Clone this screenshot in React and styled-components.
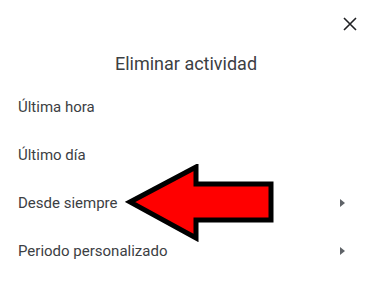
import styled, {createGlobalStyle} from 'styled-components';

const GlobalStyle = createGlobalStyle`
  html, body {
    margin: 0;
    padding: 0;
    background: #ffffff;
  }
  body {
    font-family: Roboto, "Noto Sans", Arial, sans-serif;
    color: #202124;
  }
`;

const items = [
  {label: 'Última hora', sub: false},
  {label: 'Último día', sub: false},
  {label: 'Desde siempre', sub: true},
  {label: 'Periodo personalizado', sub: true},
];

const App = () => {
  return (
    <Dialog>
      <GlobalStyle />
      <TopBar>
        <CloseButton aria-label="Cerrar">
          <svg width="14" height="14" viewBox="0 0 14 14">
            <path
              d="M1 1 L13 13 M13 1 L1 13"
              stroke="#202124"
              strokeWidth="1.6"
              fill="none"
            />
          </svg>
        </CloseButton>
      </TopBar>
      <Title>Eliminar actividad</Title>
      <List>
        {items.map(el => (
          <Row key={el.label}>
            <RowLabel>{el.label}</RowLabel>
            {el.sub && <Caret />}
          </Row>
        ))}
      </List>
      <Pointer width="152" height="78" viewBox="0 0 152 78">
        <polygon
          points="5,38 71,3 71,20 146,20 146,56 71,56 71,74"
          fill="#ff0000"
          stroke="#000000"
          strokeWidth="5"
          strokeLinejoin="miter"
        />
      </Pointer>
    </Dialog>
  );
};

export default App;

const Dialog = styled.div`
  position: relative;
  width: 378px;
  height: 303px;
  background: #ffffff;
  overflow: hidden;
`;

const TopBar = styled.div`
  display: flex;
  justify-content: flex-end;
  height: 48px;
  padding-right: 12px;
  align-items: center;
`;

const CloseButton = styled.button`
  display: flex;
  align-items: center;
  justify-content: center;
  width: 32px;
  height: 32px;
  border: none;
  background: transparent;
  padding: 0;
`;

const Title = styled.div`
  text-align: center;
  font-size: 18px;
  line-height: 32px;
  padding-right: 6px;
  color: #3c4043;
`;

const List = styled.div`
  display: flex;
  flex-direction: column;
  margin-top: 3px;
`;

const Row = styled.div`
  display: flex;
  align-items: center;
  justify-content: space-between;
  height: 48px;
  padding: 0 33px 0 18px;
`;

const RowLabel = styled.span`
  font-size: 15px;
  color: #3c4043;
`;

const Caret = styled.span`
  width: 0;
  height: 0;
  border-top: 4px solid transparent;
  border-bottom: 4px solid transparent;
  border-left: 5px solid #5f6368;
`;

const Pointer = styled.svg`
  position: absolute;
  left: 125px;
  top: 164px;
`;
